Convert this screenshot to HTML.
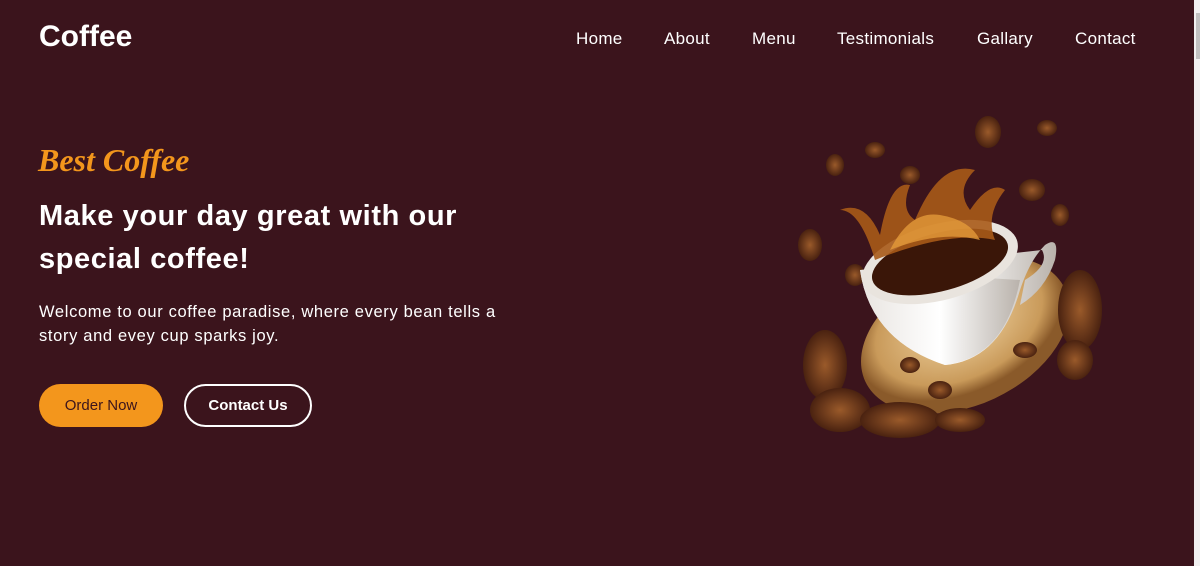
<!DOCTYPE html>
<html><head><style>
*{margin:0;padding:0;box-sizing:border-box}
body{width:1200px;height:566px;background:#3b141c;font-family:"Liberation Sans",sans-serif;color:#fff;position:relative;overflow:hidden}
.logo{position:absolute;left:39px;top:20px;font-size:30px;font-weight:bold;letter-spacing:0px}
nav{position:absolute;top:29px;left:0;font-size:17px;letter-spacing:0.3px}
nav span{position:absolute;white-space:nowrap}
.sub{position:absolute;left:38px;top:142px;font-family:"Liberation Serif",serif;font-style:italic;font-weight:bold;font-size:32px;color:#f3961c}
h1{position:absolute;left:39px;top:195px;font-size:29px;line-height:43px;font-weight:bold;width:480px;letter-spacing:0.6px}
p{position:absolute;left:39px;top:300px;font-size:16.5px;line-height:24px;width:490px;letter-spacing:0.65px}
.b1{position:absolute;left:39px;top:384px;width:124px;height:43px;border-radius:22px;background:#f3961c;color:#3b141c;font-size:15px;text-align:center;line-height:43px}
.b2{position:absolute;left:184px;top:384px;width:128px;height:43px;border-radius:22px;border:2px solid #fff;font-size:15px;font-weight:bold;text-align:center;line-height:39px}
.sb{position:absolute;right:0;top:0;width:6px;height:566px;background:#f1f1f1}
.th{position:absolute;right:0;top:13px;width:4px;height:46px;background:#c1c1c1}
</style></head><body>
<div class="logo">Coffee</div>
<nav><span style="left:576px">Home</span><span style="left:664px">About</span><span style="left:752px">Menu</span><span style="left:837px">Testimonials</span><span style="left:977px">Gallary</span><span style="left:1075px">Contact</span></nav>
<div class="sub">Best Coffee</div>
<h1>Make your day great with our special coffee!</h1>
<p>Welcome to our coffee paradise, where every bean tells a story and evey cup sparks joy.</p>
<div class="b1">Order Now</div>
<div class="b2">Contact Us</div>
<svg style="position:absolute;left:780px;top:110px" width="350" height="340" viewBox="0 0 350 340">
<defs>
<radialGradient id="s" cx="0.5" cy="0.4"><stop offset="0" stop-color="#f4d9a8"/><stop offset="0.8" stop-color="#c99a5a"/><stop offset="1" stop-color="#8a5a2a"/></radialGradient>
<linearGradient id="c" x1="0" x2="1"><stop offset="0" stop-color="#e8e4e0"/><stop offset="0.5" stop-color="#fff"/><stop offset="1" stop-color="#b9b2ab"/></linearGradient>
<radialGradient id="b"><stop offset="0" stop-color="#9a5a2a"/><stop offset="1" stop-color="#4a2210"/></radialGradient>
</defs>
<ellipse cx="185" cy="225" rx="110" ry="70" fill="url(#s)" transform="rotate(-25 185 225)"/>
<g fill="url(#b)">
<ellipse cx="45" cy="255" rx="22" ry="35"/><ellipse cx="60" cy="300" rx="30" ry="22"/><ellipse cx="120" cy="310" rx="40" ry="18"/><ellipse cx="180" cy="310" rx="25" ry="12"/>
<ellipse cx="300" cy="200" rx="22" ry="40"/><ellipse cx="295" cy="250" rx="18" ry="20"/><ellipse cx="30" cy="135" rx="12" ry="16"/>
<ellipse cx="95" cy="40" rx="10" ry="8"/><ellipse cx="55" cy="55" rx="9" ry="11"/><ellipse cx="208" cy="22" rx="13" ry="16"/><ellipse cx="267" cy="18" rx="10" ry="8"/>
<ellipse cx="252" cy="80" rx="13" ry="11"/><ellipse cx="280" cy="105" rx="9" ry="11"/><ellipse cx="130" cy="65" rx="10" ry="9"/><ellipse cx="75" cy="165" rx="10" ry="11"/>
<ellipse cx="245" cy="240" rx="12" ry="8"/><ellipse cx="160" cy="280" rx="12" ry="9"/><ellipse cx="130" cy="255" rx="10" ry="8"/>
</g>
<path d="M80 160 Q90 230 165 255 Q220 250 240 180 Q250 150 265 135 Q280 125 275 150 Q265 180 240 195 L245 170 Q270 155 262 140 Z" fill="url(#c)"/>
<path d="M80 160 Q90 230 165 255 Q225 248 240 170 Z" fill="url(#c)"/>
<ellipse cx="160" cy="152" rx="80" ry="38" fill="#e9e4de" transform="rotate(-15 160 152)"/>
<ellipse cx="160" cy="152" rx="70" ry="29" fill="#3a1608" transform="rotate(-15 160 152)"/>
<path d="M95 150 Q80 100 60 100 Q85 90 100 125 Q110 70 130 75 Q120 100 135 110 Q160 50 195 60 Q175 80 190 100 Q210 70 225 80 Q205 105 215 130 Q170 120 95 150Z" fill="#a85a18" opacity="0.9"/>
<path d="M110 140 Q130 100 160 105 Q190 110 200 130 Q160 120 110 140Z" fill="#e39a3a" opacity="0.8"/>
</svg>
<div class="sb"><div class="th"></div></div>
</body></html>
